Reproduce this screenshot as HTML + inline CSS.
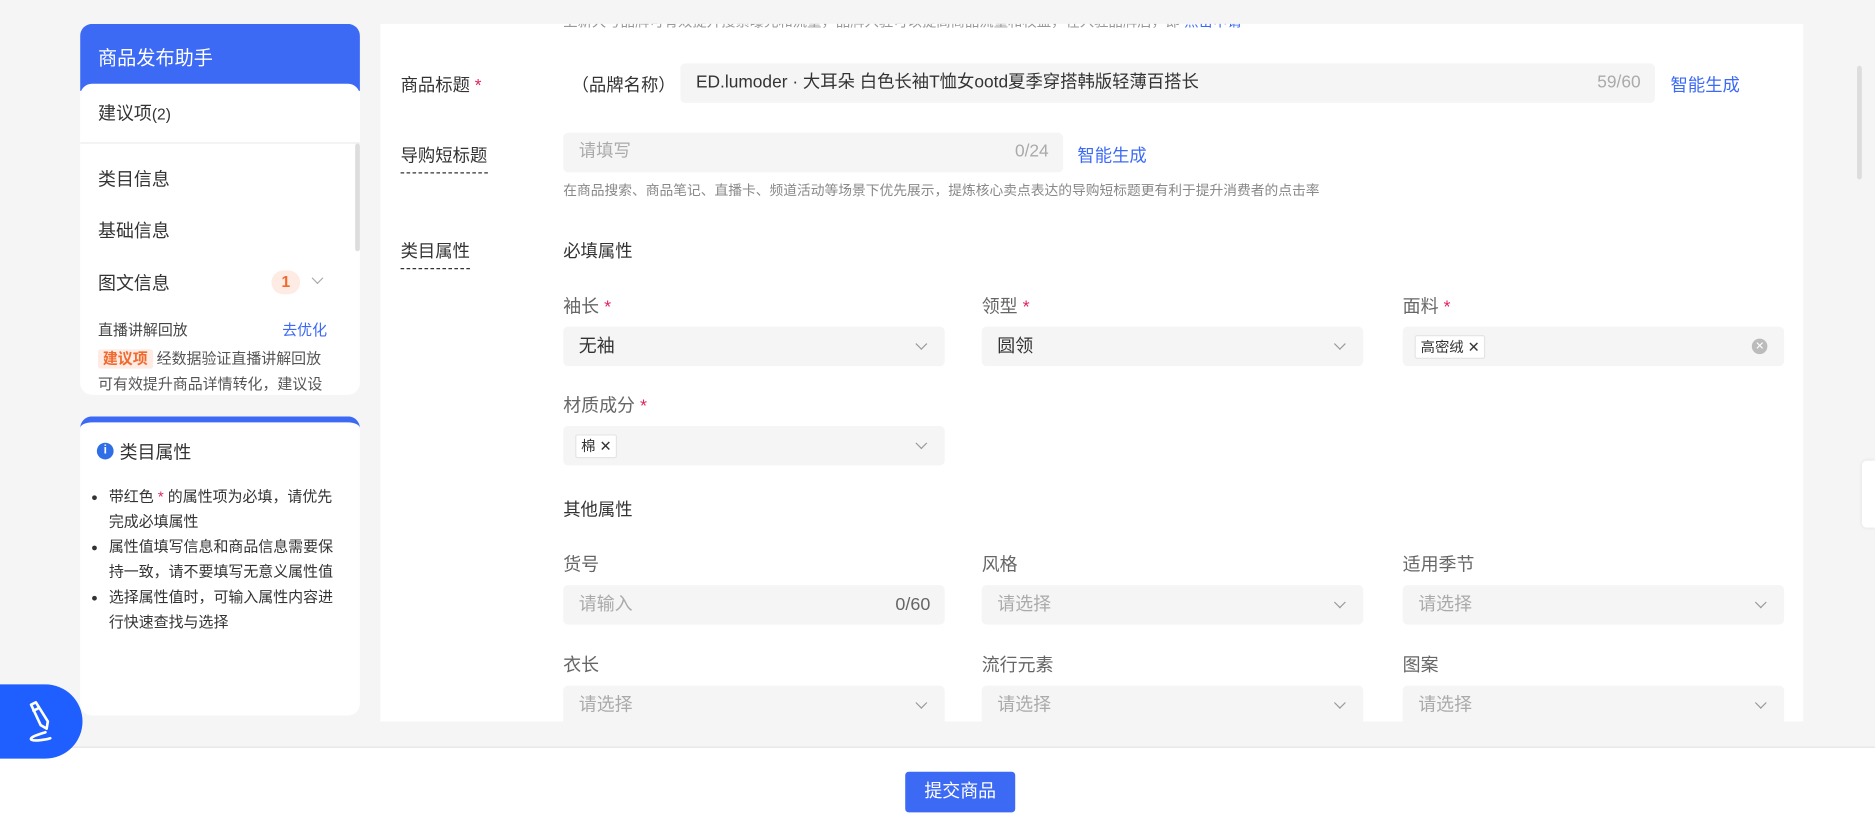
<!DOCTYPE html>
<html><head><meta charset="utf-8"><style>
*{box-sizing:border-box;margin:0;padding:0}
html,body{width:1875px;height:816px;overflow:hidden;background:#f5f5f5}
body{font-family:"Liberation Sans","Noto Sans CJK SC",sans-serif;color:#333}
#s{position:absolute;left:0;top:0;width:1568px;height:682px;transform-origin:0 0;transform:scale(1.19579,1.19648)}
.a{position:absolute;white-space:nowrap}
.blue{color:#3d6af5}
.inp{position:absolute;height:33px;background:#f5f5f5;border-radius:4px;font-size:15px;line-height:33px;padding-left:13px}
.ph{color:#aaa}
.chev{position:absolute;right:16px;top:11px;width:7px;height:7px;border-right:1px solid #999;border-bottom:1px solid #999;transform:rotate(45deg)}
.lab{position:absolute;font-size:15px;color:#666}
.req{color:#e0245e}
.tag{display:inline-block;background:#fff;border:1px solid #e5e5e5;border-radius:2px;font-size:12px;line-height:18px;padding:0 4px;color:#333;vertical-align:middle}
</style></head><body><div id="s">
<!-- left panel -->
<div class="a" style="left:67px;top:20px;width:234px;height:310px;background:#fff;border-radius:10px;overflow:hidden">
 <div style="height:56px;background:#3d6af5;color:#fff;font-size:16px;padding:15px 0 0 15px">商品发布助手</div>
 <div style="position:absolute;top:50px;left:0;right:0;height:50px;background:#fff;border-radius:10px 10px 0 0;border-bottom:1px solid #e8e8e8;font-size:15px;padding:14px 0 0 15px">建议项<span style="font-size:13px">(2)</span></div>
 <div style="position:absolute;left:230px;top:100px;width:4px;height:90px;background:#ddd;border-radius:2px"></div>
 <div class="a" style="left:15px;top:119px;font-size:15px">类目信息</div>
 <div class="a" style="left:15px;top:162px;font-size:15px">基础信息</div>
 <div class="a" style="left:15px;top:206px;font-size:15px">图文信息</div>
 <div class="a" style="left:160px;top:206px;width:24px;height:20px;border-radius:10px;background:#fdebe4;color:#f06a2e;font-size:13px;font-weight:bold;text-align:center;line-height:20px">1</div>
 <div class="a" style="left:195px;top:209px;width:7px;height:7px;border-right:1px solid #aaa;border-bottom:1px solid #aaa;transform:rotate(45deg)"></div>
 <div class="a" style="left:15px;top:245px;font-size:12.5px;color:#444">直播讲解回放</div>
 <div class="a blue" style="left:169px;top:245px;font-size:12.5px">去优化</div>
 <div class="a" style="left:15px;top:270px;font-size:12.5px;color:#555;line-height:21px"><span style="background:#fdebe4;color:#f06a2e;font-weight:bold;padding:1px 4px;border-radius:2px">建议项</span> 经数据验证直播讲解回放<br>可有效提升商品详情转化，建议设</div>
</div>
<div class="a" style="left:67px;top:348px;width:234px;height:250px;background:#fff;border-radius:10px;border-top:5px solid #3d6af5;white-space:normal">
 <div class="a" style="left:14px;top:17px;width:14px;height:14px;border-radius:50%;background:#2f6ee6;color:#fff;font-size:10px;font-weight:bold;text-align:center;line-height:14px">i</div>
 <div class="a" style="left:33px;top:14px;font-size:15px">类目属性</div>
 <ul style="position:absolute;left:24px;top:52px;width:196px;font-size:12.5px;line-height:21px;color:#333;white-space:normal">
  <li>带红色 <span class="req">*</span> 的属性项为必填，请优先完成必填属性</li>
  <li>属性值填写信息和商品信息需要保持一致，请不要填写无意义属性值</li>
  <li>选择属性值时，可输入属性内容进行快速查找与选择</li>
 </ul>
</div>
<!-- main card -->
<div class="a" style="left:318px;top:20px;width:1190px;height:583px;background:#fff"></div>
<div class="a" style="left:318px;top:20px;width:1190px;height:4px;overflow:hidden"><div style="position:absolute;left:153px;top:-11px;font-size:12px;color:#999">上新大号品牌可有效提升搜索曝光和流量，品牌入驻可以提高商品流量和权益，在入驻品牌后，即 <span class="blue">点击申请</span></div></div>
<div class="a" style="left:335px;top:60px;font-size:14.5px">商品标题 <span class="req">*</span></div>
<div class="a" style="left:478px;top:60px;font-size:14.5px">（品牌名称）</div>
<div class="inp" style="left:569px;top:53px;width:815px;font-size:14.5px">ED.lumoder · 大耳朵 白色长袖T恤女ootd夏季穿搭韩版轻薄百搭长<span class="a ph" style="right:12px;top:0">59/60</span></div>
<div class="a blue" style="left:1397px;top:60px;font-size:14.5px">智能生成</div>
<div class="a" style="left:335px;top:119px;font-size:14.5px;border-bottom:1px dashed #333;padding-bottom:4px">导购短标题</div>
<div class="inp ph" style="left:471px;top:111px;width:418px;font-size:14.5px">请填写<span class="a" style="right:12px;top:0">0/24</span></div>
<div class="a blue" style="left:901px;top:119px;font-size:14.5px">智能生成</div>
<div class="a" style="left:471px;top:151px;font-size:11.5px;color:#888">在商品搜索、商品笔记、直播卡、频道活动等场景下优先展示，提炼核心卖点表达的导购短标题更有利于提升消费者的点击率</div>
<div class="a" style="left:335px;top:199px;font-size:14.5px;border-bottom:1px dashed #333;padding-bottom:4px">类目属性</div>
<div class="a" style="left:471px;top:199px;font-size:14.5px">必填属性</div>

<div class="lab" style="left:471px;top:245px">袖长 <span class="req">*</span></div>
<div class="lab" style="left:821px;top:245px">领型 <span class="req">*</span></div>
<div class="lab" style="left:1173px;top:245px">面料 <span class="req">*</span></div>
<div class="inp" style="left:471px;top:273px;width:319px">无袖<i class="chev"></i></div>
<div class="inp" style="left:821px;top:273px;width:319px">圆领<i class="chev"></i></div>
<div class="inp" style="left:1173px;top:273px;width:319px;padding-left:10px"><span class="tag">高密绒 ✕</span><span class="a" style="right:14px;top:10px;width:13px;height:13px;border-radius:50%;background:#bbb;color:#fff;font-size:9px;line-height:13px;text-align:center">✕</span></div>
<div class="lab" style="left:471px;top:328px">材质成分 <span class="req">*</span></div>
<div class="inp" style="left:471px;top:356px;width:319px;padding-left:10px"><span class="tag">棉 ✕</span><i class="chev"></i></div>
<div class="a" style="left:471px;top:415px;font-size:14.5px">其他属性</div>
<div class="lab" style="left:471px;top:461px">货号</div>
<div class="lab" style="left:821px;top:461px">风格</div>
<div class="lab" style="left:1173px;top:461px">适用季节</div>
<div class="inp ph" style="left:471px;top:489px;width:319px">请输入<span class="a" style="right:12px;top:0;color:#666">0/60</span></div>
<div class="inp ph" style="left:821px;top:489px;width:319px">请选择<i class="chev"></i></div>
<div class="inp ph" style="left:1173px;top:489px;width:319px">请选择<i class="chev"></i></div>
<div class="lab" style="left:471px;top:545px">衣长</div>
<div class="lab" style="left:821px;top:545px">流行元素</div>
<div class="lab" style="left:1173px;top:545px">图案</div>
<div style="position:absolute;left:0;top:0;width:1568px;height:603px;overflow:hidden;pointer-events:none">
<div class="inp ph" style="left:471px;top:573px;width:319px">请选择<i class="chev"></i></div>
<div class="inp ph" style="left:821px;top:573px;width:319px">请选择<i class="chev"></i></div>
<div class="inp ph" style="left:1173px;top:573px;width:319px">请选择<i class="chev"></i></div>
</div>
<div class="a" style="left:1553px;top:55px;width:4px;height:95px;background:#ddd;border-radius:2px"></div>
<div class="a" style="left:1557px;top:385px;width:11px;height:56px;background:#fff;border-radius:4px 0 0 4px;box-shadow:0 0 3px rgba(0,0,0,.1)"></div>
<!-- bottom bar -->
<div class="a" style="left:0;top:624px;width:1568px;height:58px;background:#fff;border-top:1px solid #e3e3e3"></div>
<div class="a" style="left:757px;top:645px;width:92px;height:34px;background:#3d6af5;border-radius:3px;color:#fff;font-size:15px;text-align:center;line-height:34px">提交商品</div>
<div class="a" style="left:0;top:572px;width:69px;height:62px;background:#1f5eff;border-radius:0 31px 31px 0">
 <svg width="30" height="36" viewBox="0 0 30 36" style="position:absolute;left:20px;top:13px" fill="none" stroke="#fff" stroke-width="2.2" stroke-linecap="round" stroke-linejoin="round"><path d="M6 4l4-2 10 16-1 6-5-3z"/><path d="M8 9l4-2"/><path d="M18 27c-6 2-13 4-12 6 1 2 14 0 16-1"/></svg>
</div>
</div></body></html>
